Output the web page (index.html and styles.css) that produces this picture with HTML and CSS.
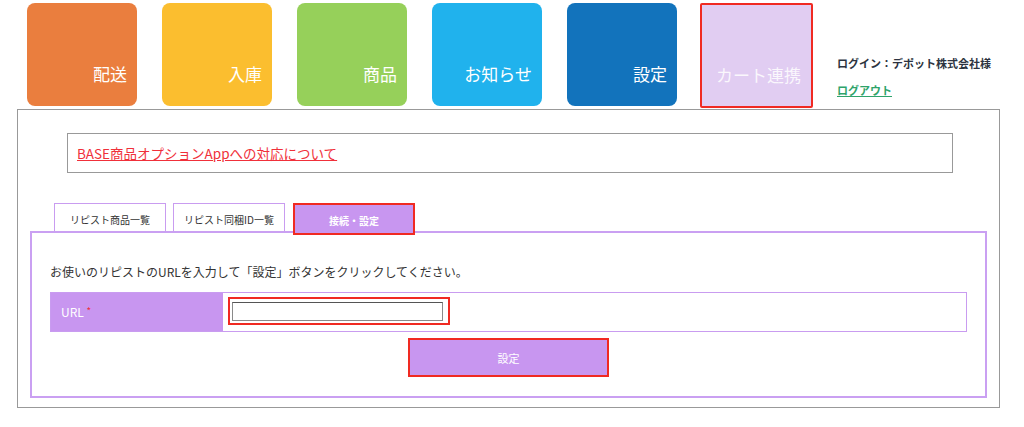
FILE: index.html
```html
<!DOCTYPE html>
<html lang="ja">
<head>
<meta charset="utf-8">
<title>カート連携</title>
<link rel="stylesheet" href="styles.css">
</head>
<body>
<header class="top">
  <nav class="tiles">
    <a class="tile t-orange" href="#">配送</a>
    <a class="tile t-yellow" href="#">入庫</a>
    <a class="tile t-green" href="#">商品</a>
    <a class="tile t-sky" href="#">お知らせ</a>
    <a class="tile t-blue" href="#">設定</a>
    <a class="tile t-cart" href="#">カート連携</a>
  </nav>
  <div class="user">
    <div class="user-name">ログイン：デポット株式会社様</div>
    <a class="logout" href="#">ログアウト</a>
  </div>
</header>
<main class="panel">
  <div class="notice"><a href="#">BASE商品オプションAppへの対応について</a></div>
  <div class="tabs">
    <a class="tab" href="#">リピスト商品一覧</a>
    <a class="tab" href="#">リピスト同梱ID一覧</a>
    <a class="tab tab-active" href="#">接続・設定</a>
  </div>
  <section class="tabbody">
    <p class="lead">お使いのリピストのURLを入力して「設定」ボタンをクリックしてください。</p>
    <div class="row">
      <div class="label">URL <span class="req">*</span></div>
      <div class="field"><span class="hl"><input class="input" type="text"></span></div>
    </div>
    <div class="actions"><button class="btn" type="button">設定</button></div>
  </section>
</main>
</body>
</html>
```

FILE: styles.css
```css
* { box-sizing: border-box; }
body {
  margin: 0;
  background: #fff;
  font-family: "Noto Sans CJK JP", "Noto Sans", "Liberation Sans", sans-serif;
  color: #333;
}
.top {
  display: flex;
  height: 106px;
  padding: 3px 0 0 27px;
}
.tiles {
  display: flex;
  gap: 25px;
  align-items: flex-start;
}
.tile {
  width: 110px;
  height: 103px;
  border-radius: 8px;
  display: flex;
  align-items: flex-end;
  justify-content: flex-end;
  padding: 0 10px 22px 0;
  color: #fff;
  font-size: 17px;
  line-height: 20px;
  text-decoration: none;
}
.t-orange { background: #ea7e3e; }
.t-yellow { background: #fbbe2f; }
.t-green { background: #96d05a; }
.t-sky { background: #20b2ed; }
.t-blue { background: #1273bc; }
.t-cart {
  background: #e1cdf2;
  color: rgba(255,255,255,0.85);
  width: 113px;
  height: 105px;
  margin-left: -2px;
  border: 2px solid #f02a22;
  border-radius: 2px;
  padding: 0 10px 21px 0;
}
.user {
  margin-left: 24px;
  padding-top: 52px;
  font-size: 11px;
  font-weight: 700;
}
.user-name {
  line-height: 16px;
  color: #2c3340;
}
.logout {
  display: inline-block;
  margin-top: 11px;
  line-height: 16px;
  color: #2ea36a;
  text-decoration: underline;
}
.panel {
  margin: 3px 0 0 17px;
  width: 983px;
  height: 299px;
  border: 1px solid #999;
  padding-top: 23px;
}
.notice {
  margin-left: 49px;
  width: 886px;
  height: 40px;
  border: 1px solid #999;
  padding-left: 9px;
  font-size: 13.5px;
  line-height: 38px;
}
.notice a { color: #f0303a; }
.tabs {
  display: flex;
  align-items: flex-start;
  margin: 30px 0 0 36px;
  height: 28px;
}
.tab {
  width: 112px;
  height: 28px;
  margin-right: 7px;
  border: 1px solid #c99cf0;
  border-bottom: 0;
  display: flex;
  align-items: center;
  justify-content: center;
  padding-top: 3px;
  font-size: 10px;
  color: #333;
  text-decoration: none;
  background: #fff;
}
.tab-active {
  width: 122px;
  height: 32px;
  margin-left: 1px;
  background: #c896f0;
  border: 2px solid #f02a22;
  color: #fff;
  font-weight: 700;
  position: relative;
  z-index: 1;
}
.tabbody {
  margin-left: 12px;
  width: 957px;
  height: 167px;
  border: 2px solid #caa0f2;
  padding: 31px 0 0 18px;
}
.lead {
  margin: 0;
  font-size: 12px;
  line-height: 16px;
}
.row {
  display: flex;
  margin-top: 12px;
  width: 917px;
  height: 40px;
  border: 1px solid #c99cf0;
}
.label {
  width: 172px;
  background: #c896f0;
  color: #fff;
  font-size: 12px;
  line-height: 38px;
  padding-left: 10px;
}
.req { color: #f0303a; font-size: 10px; vertical-align: top; line-height: 36px; }
.field {
  padding: 4px 0 0 5px;
}
.hl {
  display: block;
  width: 222px;
  height: 28px;
  border: 2px solid #f02a22;
  padding: 3px 0 0 2px;
}
.input {
  display: block;
  width: 211px;
  height: 19px;
  margin: 0;
  border: 1px solid #8a8a8a;
  border-top-color: #555;
  padding: 0;
  background: #fff;
}
.actions {
  display: flex;
  justify-content: center;
  width: 917px;
  margin-top: 6px;
}
.btn {
  width: 201px;
  height: 39px;
  background: #c896f0;
  border: 2px solid #f02a22;
  color: #fff;
  font-family: inherit;
  font-size: 11px;
  padding: 0;
}
```
